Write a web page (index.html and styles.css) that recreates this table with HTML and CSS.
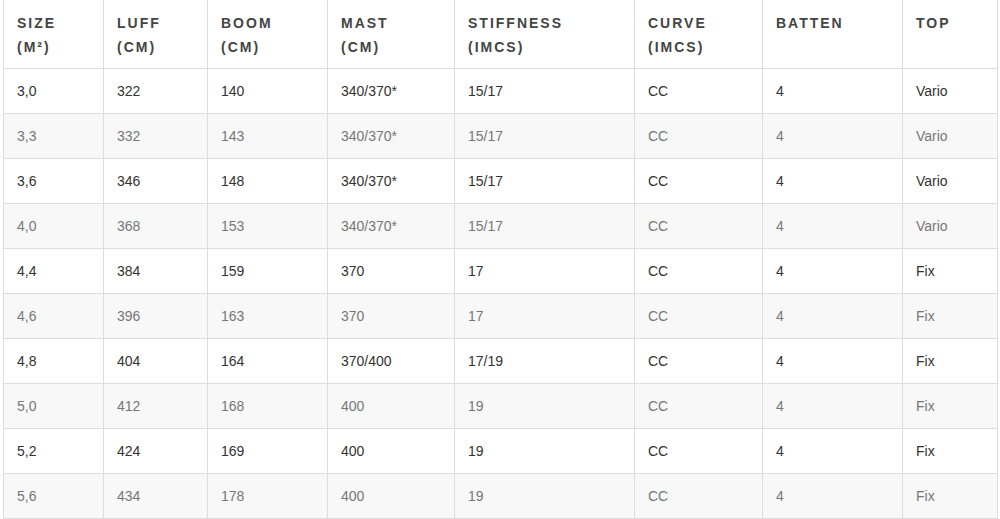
FILE: index.html
```html
<!DOCTYPE html>
<html>
<head>
<meta charset="utf-8">
<link rel="stylesheet" href="styles.css">
</head>
<body>
<div class="wrap">
<table class="specs">
<thead>
<tr>
<th class="c1">Size<br>(m²)</th>
<th class="c2">Luff<br>(cm)</th>
<th class="c3">Boom<br>(cm)</th>
<th class="c4">Mast<br>(cm)</th>
<th class="c5">Stiffness<br>(IMCS)</th>
<th class="c6">Curve<br>(IMCS)</th>
<th class="c7">Batten</th>
<th class="c8">Top</th>
</tr>
</thead>
<tbody>
<tr><td>3,0</td><td>322</td><td>140</td><td>340/370*</td><td>15/17</td><td>CC</td><td>4</td><td>Vario</td></tr>
<tr><td>3,3</td><td>332</td><td>143</td><td>340/370*</td><td>15/17</td><td>CC</td><td>4</td><td>Vario</td></tr>
<tr><td>3,6</td><td>346</td><td>148</td><td>340/370*</td><td>15/17</td><td>CC</td><td>4</td><td>Vario</td></tr>
<tr><td>4,0</td><td>368</td><td>153</td><td>340/370*</td><td>15/17</td><td>CC</td><td>4</td><td>Vario</td></tr>
<tr><td>4,4</td><td>384</td><td>159</td><td>370</td><td>17</td><td>CC</td><td>4</td><td>Fix</td></tr>
<tr><td>4,6</td><td>396</td><td>163</td><td>370</td><td>17</td><td>CC</td><td>4</td><td>Fix</td></tr>
<tr><td>4,8</td><td>404</td><td>164</td><td>370/400</td><td>17/19</td><td>CC</td><td>4</td><td>Fix</td></tr>
<tr><td>5,0</td><td>412</td><td>168</td><td>400</td><td>19</td><td>CC</td><td>4</td><td>Fix</td></tr>
<tr><td>5,2</td><td>424</td><td>169</td><td>400</td><td>19</td><td>CC</td><td>4</td><td>Fix</td></tr>
<tr><td>5,6</td><td>434</td><td>178</td><td>400</td><td>19</td><td>CC</td><td>4</td><td>Fix</td></tr>
</tbody>
</table>
</div>
</body>
</html>
```
FILE: styles.css
```css
html, body {
  margin: 0;
  padding: 0;
  background: #ffffff;
}
.wrap {
  padding-left: 3px;
}
.specs {
  border-collapse: collapse;
  table-layout: fixed;
  width: 995px;
  font-family: "Liberation Sans", Arial, Helvetica, sans-serif;
  font-size: 14px;
  color: #333333;
}
.specs th,
.specs td {
  border: 1px solid #dddddd;
  text-align: left;
  vertical-align: top;
  padding: 12px 13px 12px 13px;
}
.specs th {
  font-weight: bold;
  text-transform: uppercase;
  letter-spacing: 2px;
  line-height: 24px;
  color: #444444;
  padding-top: 11px;
  padding-bottom: 9px;
  border-top: none;
}
.specs td {
  line-height: 20px;
  height: 20px;
}
.specs tbody tr:nth-child(even) td {
  background: #f8f8f8;
  color: #777777;
}
.c1 { width: 73px; }
.c2 { width: 77px; }
.c3 { width: 93px; }
.c4 { width: 100px; }
.c5 { width: 153px; }
.c6 { width: 101px; }
.c7 { width: 113px; }
.c8 { width: 68px; }
```
